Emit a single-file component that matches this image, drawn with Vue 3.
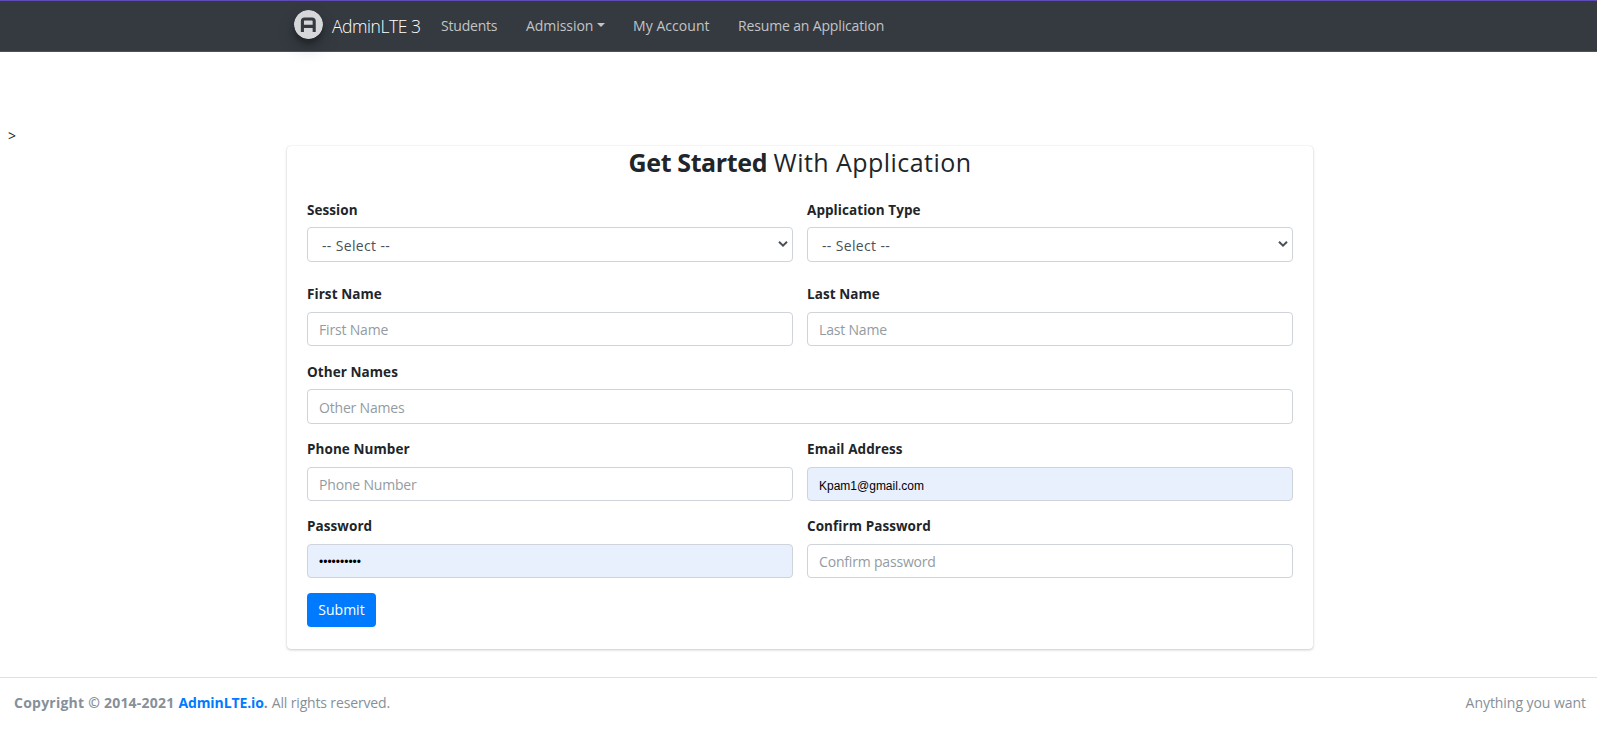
<script setup>
import { ref } from 'vue'

const links = [
  { text: 'Students', cls: 'students' },
  { text: 'Admission', cls: 'admission', caret: true },
  { text: 'My Account', cls: 'account' },
  { text: 'Resume an Application', cls: 'resume' },
]

const selects = ref([
  { label: 'Session', value: '' },
  { label: 'Application Type', value: '' },
])
const email = ref('Kpam1@gmail.com')
const password = ref('abcdefghij')
</script>

<template>
  <div class="page">
    <nav class="navbar">
      <div class="container">
        <a class="brand">
          <svg class="logo" viewBox="0 0 29 29" width="29" height="29">
            <circle cx="14.5" cy="14.5" r="14.5" fill="#d6d7d9" />
            <path d="M8.4 22V11.2Q8.4 9 10.6 9H18Q20.2 9 20.2 11.2V22M8.4 16.4H20.2" fill="none" stroke="#343a40" stroke-width="3.1" />
          </svg>
          <span class="brand-text">AdminLTE 3</span>
        </a>
        <a v-for="l in links" :key="l.text" class="link" :class="l.cls">
          <span>{{ l.text }}</span><i v-if="l.caret" class="caret"></i>
        </a>
      </div>
    </nav>

    <div class="stray">&gt;</div>

    <main class="card">
      <h3 class="title"><b>Get Started</b> <span>With Application</span></h3>
      <form class="form" @submit.prevent>
        <div v-for="s in selects" :key="s.label" class="field first">
          <label>{{ s.label }}</label>
          <div class="select-wrap">
            <select v-model="s.value" class="control tall"><option value="">-- Select --</option></select>
            <svg class="chevron" viewBox="0 0 10 6" width="10" height="6">
              <path d="M1 0.8L5 4.6L9 0.8" fill="none" stroke="#495057" stroke-width="2" />
            </svg>
          </div>
        </div>
        <div class="field">
          <label>First Name</label>
          <input class="control raised" placeholder="First Name" />
        </div>
        <div class="field">
          <label>Last Name</label>
          <input class="control raised" placeholder="Last Name" />
        </div>
        <div class="field wide">
          <label>Other Names</label>
          <input class="control tall" placeholder="Other Names" />
        </div>
        <div class="field">
          <label>Phone Number</label>
          <input class="control" placeholder="Phone Number" />
        </div>
        <div class="field">
          <label>Email Address</label>
          <input v-model="email" class="control filled email" />
        </div>
        <div class="field">
          <label>Password</label>
          <input v-model="password" type="password" class="control filled" />
        </div>
        <div class="field">
          <label>Confirm Password</label>
          <input type="password" class="control raised" placeholder="Confirm password" />
        </div>
        <button class="submit" type="submit">Submit</button>
      </form>
    </main>

    <footer class="footer">
      <div><strong>Copyright © 2014-2021 <a>AdminLTE.io</a>.</strong> <span class="rights">All rights reserved.</span></div>
      <div class="right">Anything you want</div>
    </footer>
  </div>
</template>

<style>
body {
  background: #fff;
}
</style>

<style scoped>
.page {
  box-sizing: border-box;
  height: 756px;
  overflow: hidden;
  font-family: "Open Sans", "Noto Sans", sans-serif;
  font-size: 14px;
  color: #212529;
}
.page *,
.page *::before {
  box-sizing: border-box;
}
.navbar {
  height: 52px;
  background: #343a40;
  border-top: 1px solid #5f4bb6;
  border-bottom: 1px solid #4b545c;
}
.container {
  width: 1026px;
  margin-left: 287px;
  padding-left: 7px;
  height: 50px;
  display: flex;
  align-items: center;
}
.brand {
  display: flex;
  align-items: center;
  width: 125px;
  margin-right: 22px;
  color: #fff;
  flex: none;
}
.logo {
  flex: none;
  border-radius: 50%;
  margin-right: 9px;
  margin-top: -3px;
  box-shadow: 0 9px 18px rgba(0, 0, 0, 0.19), 0 5px 5px rgba(0, 0, 0, 0.23);
}
.brand-text {
  font-size: 17.5px;
  font-weight: 300;
  letter-spacing: -0.45px;
  white-space: nowrap;
}
.link {
  display: flex;
  align-items: center;
  flex: none;
  color: #c2c4c6;
  white-space: nowrap;
  padding-bottom: 2px;
}
.students { width: 85px; letter-spacing: -0.2px; }
.admission { width: 107px; letter-spacing: -0.05px; }
.account { width: 105px; letter-spacing: 0.05px; }
.resume { letter-spacing: -0.15px; }
.caret {
  margin-left: 4px;
  border-top: 4.5px solid #c2c4c6;
  border-left: 4.5px solid transparent;
  border-right: 4.5px solid transparent;
}
.stray {
  height: 94px;
  padding: 73px 0 0 8px;
  line-height: 21px;
}
.card {
  width: 1026px;
  height: 503px;
  margin-left: 287px;
  padding: 0 20px;
  border-radius: 4px;
  background: #fff;
  box-shadow: 0 0 1px rgba(0, 0, 0, 0.13), 0 1px 3px rgba(0, 0, 0, 0.2);
}
.title {
  margin: 0;
  height: 52px;
  line-height: 32px;
  font-size: 25px;
  font-weight: 400;
  text-align: center;
}
.title b {
  letter-spacing: -0.38px;
}
.title span {
  letter-spacing: 0.45px;
}
.form {
  display: grid;
  grid-template-columns: 1fr 1fr;
  column-gap: 14px;
}
.field {
  height: 77.4px;
}
.field.first {
  height: 85px;
}
.field.wide {
  grid-column: 1 / 3;
  height: 77.6px;
}
label {
  display: block;
  height: 29px;
  line-height: 22px;
  font-weight: 700;
  font-size: 13.5px;
  letter-spacing: 0.07px;
}
.first label,
.wide label {
  line-height: 24px;
}
.select-wrap {
  position: relative;
}
.chevron {
  position: absolute;
  right: 5px;
  top: 14px;
}
.control {
  display: block;
  width: 100%;
  height: 34px;
  padding: 2px 11px 0;
  border: 1px solid #ced4da;
  border-radius: 4px;
  background: #fff;
  color: #495057;
  font: 14px "Open Sans", "Noto Sans", sans-serif;
  letter-spacing: -0.18px;
  outline: none;
}
.control.tall {
  height: 35px;
}
.control.raised {
  padding-top: 0;
}
select.control {
  appearance: none;
  padding-left: 14px;
  letter-spacing: 0.35px;
}
.control::placeholder {
  color: #939ba2;
  opacity: 1;
}
.control.filled {
  background: #e8f0fe;
  color: #000;
  font: 12px "Liberation Sans", Arial, sans-serif;
  letter-spacing: 0;
}
.control.email {
  padding-top: 4px;
}
.submit {
  width: 69px;
  height: 34px;
  padding: 0;
  border: 0;
  border-radius: 4px;
  background: #007bff;
  color: #fff;
  font: 14px "Open Sans", "Noto Sans", sans-serif;
}
.footer {
  margin-top: 28px;
  border-top: 1px solid #dee2e6;
  padding: 14px 11px 0 14px;
  display: flex;
  justify-content: space-between;
  line-height: 21px;
  color: #869099;
}
.footer strong {
  letter-spacing: 0.23px;
}
.footer a {
  color: #007bff;
  letter-spacing: -0.1px;
}
.rights {
  letter-spacing: -0.15px;
}
.right {
  letter-spacing: -0.05px;
}
</style>
